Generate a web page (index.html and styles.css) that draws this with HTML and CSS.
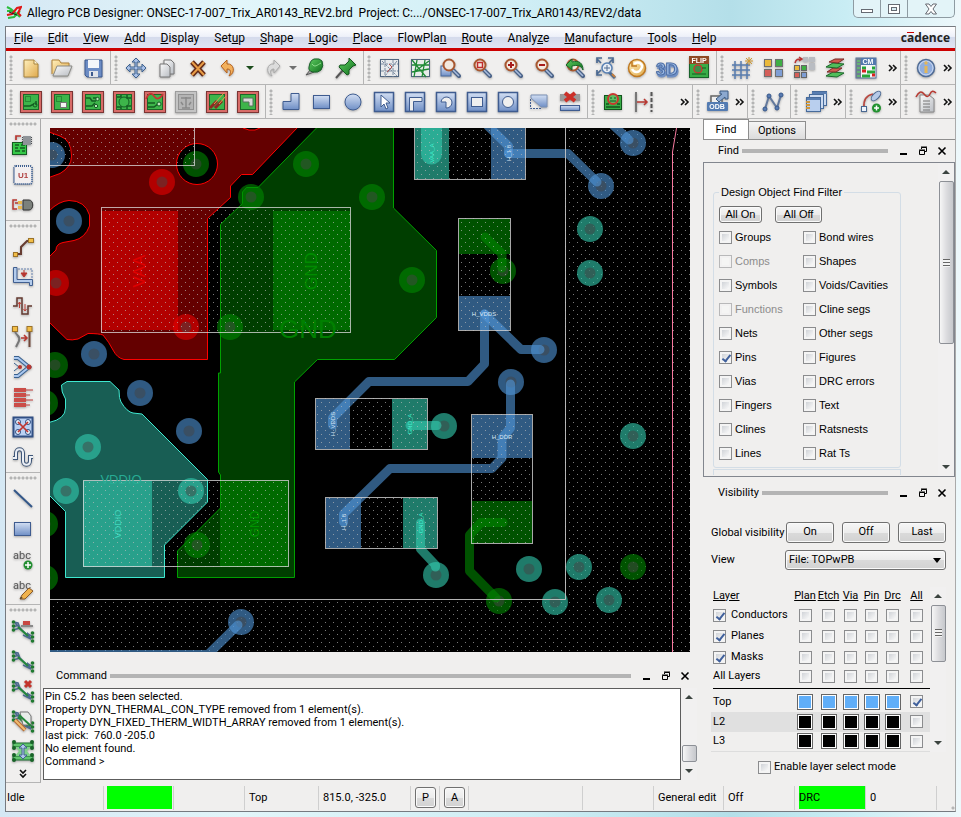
FILE: index.html
```html
<!DOCTYPE html>
<html lang="en">
<head>
<meta charset="utf-8">
<title>Allegro PCB Designer</title>
<link rel="stylesheet" href="styles.css">
</head>
<body>
<svg class="defs" aria-hidden="true">
  <defs>
    <linearGradient id="gBlue" x1="0" y1="0" x2="0" y2="1"><stop offset="0" stop-color="#d3dff3"/><stop offset="1" stop-color="#6f8fc6"/></linearGradient>
    <linearGradient id="gGold" x1="0" y1="0" x2="1" y2="1"><stop offset="0" stop-color="#fff0bd"/><stop offset="1" stop-color="#dfa94c"/></linearGradient>
    <linearGradient id="gGray" x1="0" y1="0" x2="1" y2="1"><stop offset="0" stop-color="#fafafa"/><stop offset="1" stop-color="#b9bdc3"/></linearGradient>
    <linearGradient id="gGreen" x1="0" y1="0" x2="1" y2="1"><stop offset="0" stop-color="#5fce62"/><stop offset="1" stop-color="#11701d"/></linearGradient>
    <pattern id="dots" width="8" height="8" patternUnits="userSpaceOnUse"><rect x="1" y="2" width="1" height="1" class="dot"/><rect x="5" y="6" width="1" height="1" class="dot"/></pattern>
    <symbol id="board" viewBox="0 0 24 24"><rect x="1.500" y="1.500" width="21" height="21" fill="#d86c68" stroke="#7c3534"/><rect x="4.500" y="4.500" width="15" height="15" fill="#3db54a" stroke="#1d6627"/></symbol>
    <symbol id="lens" viewBox="0 0 24 24"><path d="M14 14l6 6" stroke="#4a6288" stroke-width="4" stroke-linecap="round"/><path d="M14 14l6 6" stroke="#a8bcdc" stroke-width="1.500"/><circle cx="10" cy="9" r="5.500" fill="#f3e9df" stroke="#a8572f" stroke-width="2"/></symbol>
    <symbol id="net" viewBox="0 0 24 24"><path d="M4 4l16 16M2 3l5 1 2 5M2 8l6-2M2 11l7-2" fill="none" stroke="#4b6990" stroke-width="1.500"/><path d="M20 20l-4-6M20 20l-8-4M22 18l-6-4" fill="none" stroke="#4b6990" stroke-width="1.500"/><path d="M7 8l10 9" stroke="#23873a" stroke-width="2"/><g fill="#1f7a30"><circle cx="2.500" cy="3" r="1.800"/><circle cx="2.500" cy="7" r="1.800"/><circle cx="2.500" cy="11" r="1.800"/><circle cx="21.500" cy="14" r="1.800"/><circle cx="21.500" cy="18" r="1.800"/><circle cx="21.500" cy="22" r="1.800"/></g></symbol>
    <symbol id="more" viewBox="0 0 10 8"><path d="M1 1l3 3-3 3M5 1l3 3-3 3" fill="none" stroke="#111" stroke-width="1.600"/></symbol>
    <symbol id="min" viewBox="0 0 10 10"><path d="M1 8h7" stroke="#000" stroke-width="2"/></symbol>
    <symbol id="restore" viewBox="0 0 10 10"><path d="M3.500 3V1.500h5v4H7M1.500 4.500h5v4h-5zM3 1h6M1 4h6" fill="none" stroke="#000"/></symbol>
    <symbol id="close" viewBox="0 0 10 10"><path d="M1.500 1.500l7 7M8.500 1.500l-7 7" stroke="#000" stroke-width="1.600"/></symbol>
    <symbol id="via" viewBox="-14 -14 28 28" overflow="visible"><circle r="13"/><circle r="5.500" class="hole"/></symbol>
  </defs>
</svg>

<header class="titlebar">
  <svg class="logo" viewBox="0 0 16 16"><path d="M1 2l4 2 9 8M1 6l5 0 4 5M2 13l6-1 6-6" fill="none" stroke="#2bbd3c" stroke-width="2"/><path d="M1 10l5-1 5-6 4-1-3 6 3 3" fill="none" stroke="#e01717" stroke-width="2"/><path d="M3 7l8 3" stroke="#222"/></svg>
  <h1>Allegro PCB Designer: ONSEC-17-007_Trix_AR0143_REV2.brd&nbsp; Project: C:.../ONSEC-17-007_Trix_AR0143/REV2/data</h1>
  <div class="winbuttons">
    <button aria-label="Minimize"><svg width="14" height="12"><rect x="1.500" y="6.500" width="11" height="3" fill="#fff" stroke="#666a72"/></svg></button>
    <button aria-label="Maximize"><svg width="14" height="12"><rect x="1.500" y="1.500" width="11" height="9" fill="#fff" stroke="#666a72"/><rect x="4.500" y="4.500" width="5" height="3" fill="#d8ecf2" stroke="#666a72"/></svg></button>
    <button class="wide" aria-label="Close"><svg width="14" height="12"><path d="M1.500 1h3.500l2 2.500L9 1h3.500L9 6l3.500 5H9L7 8.500 5 11H1.500L5 6z" fill="#fff" stroke="#666a72"/></svg></button>
  </div>
</header>

<div class="frame">
<nav class="menubar">
  <ul>
    <li><a href="#"><u>F</u>ile</a></li><li><a href="#"><u>E</u>dit</a></li><li><a href="#"><u>V</u>iew</a></li><li><a href="#"><u>A</u>dd</a></li><li><a href="#"><u>D</u>isplay</a></li><li><a href="#">Set<u>u</u>p</a></li><li><a href="#"><u>S</u>hape</a></li><li><a href="#"><u>L</u>ogic</a></li><li><a href="#"><u>P</u>lace</a></li><li><a href="#">FlowPla<u>n</u></a></li><li><a href="#"><u>R</u>oute</a></li><li><a href="#">Analy<u>z</u>e</a></li><li><a href="#"><u>M</u>anufacture</a></li><li><a href="#"><u>T</u>ools</a></li><li><a href="#"><u>H</u>elp</a></li>
  </ul>
  <span class="brand">c<span class="macron">a</span>dence</span>
</nav>

<div class="toolbar">
  <div class="group"><i class="grip"></i>
    <button aria-label="New"><svg viewBox="0 0 24 24"><path d="M5 4h10l4 4v13H5z" fill="url(#gGold)" stroke="#a8843f"/><path d="M15 4v4h4" fill="#fff6d8" stroke="#a8843f"/></svg></button>
    <button aria-label="Open"><svg viewBox="0 0 24 24"><path d="M2 18V4h7l2 3h8v4" fill="url(#gGold)" stroke="#b08238"/><path d="M3 20l4-10h15l-4 10z" fill="url(#gGray)" stroke="#8a8a84"/></svg></button>
    <button aria-label="Save"><svg viewBox="0 0 24 24"><path d="M4 4h17v17H6l-2-2z" fill="#6c8cc4" stroke="#3b598e"/><rect x="7" y="4" width="11" height="8" fill="#f4f6fa"/><rect x="8" y="15" width="9" height="6" fill="#dfe3ea"/><rect x="10" y="16" width="2" height="4" fill="#3b598e"/></svg></button>
  </div>
  <div class="group"><i class="grip"></i>
    <button aria-label="Move"><svg viewBox="0 0 24 24"><path d="M12 2l4 4h-3v5h5V8l4 4-4 4v-3h-5v5h3l-4 4-4-4h3v-5H6v3l-4-4 4-4v3h5V6H8z" fill="#a9c0e6" stroke="#3f628f"/></svg></button>
    <button aria-label="Copy"><svg viewBox="0 0 24 24"><path d="M9 4h7l3 3v11H9z" fill="url(#gGray)" stroke="#777"/><path d="M5 8h7l3 3v10H5z" fill="url(#gGray)" stroke="#777"/></svg></button>
    <button aria-label="Delete"><svg viewBox="0 0 24 24"><path d="M6 6l12 13M18 6L6 19" stroke="#642a16" stroke-width="5"/><path d="M6 6l12 13M18 6L6 19" stroke="#e89c46" stroke-width="2"/></svg></button>
    <button aria-label="Undo"><svg viewBox="0 0 24 24"><path d="M10 8c7-1 9 9 2 12 3-5 1-7-2-7v4L4 10l6-6z" fill="#f2b05c" stroke="#b4601c"/></svg></button>
    <button class="arrow" aria-label="Undo list"><i class="tri green"></i></button>
    <button aria-label="Redo"><svg viewBox="0 0 24 24"><path d="M14 8C7 7 5 17 12 20c-3-5-1-7 2-7v4l6-7-6-6z" fill="#dcdcdc" stroke="#aaa"/></svg></button>
    <button class="arrow" aria-label="Redo list"><i class="tri"></i></button>
    <button aria-label="Unfix"><svg viewBox="0 0 24 24"><path d="M8 13l-5 6 8-3z" fill="#aaa" stroke="#555"/><path d="M7 7q1-3 4-4 6-1 8 2 2 5-1 9-3 3-8 2-5-1-4-5z" fill="url(#gGreen)" stroke="#1a602a"/><path d="M9 8c3 4 5 1 9-1" fill="none" stroke="#8fe08e"/></svg></button>
    <button aria-label="Fix"><svg viewBox="0 0 24 24"><path d="M10 13l-8 9" stroke="#555" stroke-width="2"/><path d="M15 2l7 7-3 1-4 4v4l-2 1-8-8 1-2h5l4-4z" fill="url(#gGreen)" stroke="#14591f"/></svg></button>
  </div>
  <div class="group"><i class="grip"></i>
    <button aria-label="Unrats all"><svg viewBox="0 0 24 24"><rect x="3.500" y="3.500" width="18" height="17" fill="#e8eaec" stroke="#50657f"/><path d="M4 8h17M4 15h17M8 4v17M16 4v17M5 5l15 15M20 5L8 20" stroke="#7b8ba0" stroke-dasharray="3 1"/><path d="M12 8l3 3-5 5" fill="none" stroke="#b05050"/></svg></button>
    <button aria-label="Rats all"><svg viewBox="0 0 24 24"><rect x="3.500" y="3.500" width="18" height="17" fill="#e8ecea" stroke="#50657f"/><path d="M4 9h17M4 16l17-3M9 4l-3 17M17 4l-3 17M4 4l14 17M21 5L6 16" stroke="#1e8a34" stroke-width="1.300"/></svg></button>
    <button aria-label="Zoom window"><svg viewBox="0 0 24 24"><rect x="2" y="10" width="10" height="10" fill="url(#gBlue)" stroke="#49699c"/><use href="#lens"/></svg></button>
    <button aria-label="Zoom fit"><svg viewBox="0 0 24 24"><use href="#lens"/><rect x="7.500" y="6.500" width="5" height="5" fill="none" stroke="#c02c2c" stroke-width="1.500"/></svg></button>
    <button aria-label="Zoom in"><svg viewBox="0 0 24 24"><use href="#lens"/><path d="M10 6v6M7 9h6" stroke="#a81c1c" stroke-width="2"/></svg></button>
    <button aria-label="Zoom out"><svg viewBox="0 0 24 24"><use href="#lens"/><path d="M7 9h6" stroke="#a81c1c" stroke-width="2"/></svg></button>
    <button aria-label="Zoom previous"><svg viewBox="0 0 24 24"><use href="#lens"/><path d="M3 9l6-6v3c7-2 11 1 11 8-2-5-6-5-11-4v4z" fill="url(#gGreen)" stroke="#17672a"/></svg></button>
    <button aria-label="Zoom points"><svg viewBox="0 0 24 24"><path d="M3 7V2h5M14 2h5v5M8 19H3v-5M3 3l4 4M19 3l-4 4M3 18l4-4" fill="none" stroke="#4a6992" stroke-width="1.700"/><path d="M15 16l6 6" stroke="#4a6992" stroke-width="3"/><circle cx="13" cy="12" r="5" fill="#e8edf4" stroke="#5880b4" stroke-width="1.500"/><path d="M13 9v6M10 12h6" stroke="#506d93"/><path d="M18 18l3 3" stroke="#c6803f" stroke-width="2"/></svg></button>
    <button aria-label="Redraw"><svg viewBox="0 0 24 24"><circle cx="12" cy="12" r="8.500" fill="url(#gGold)" stroke="#c0781f" stroke-width="1.500"/><path d="M9 8c5-4 10 1 7 5-2 4-7 4-9 0" fill="none" stroke="#fff" stroke-width="2.500"/><path d="M7 6v4h5" fill="none" stroke="#c0781f" stroke-width="1.500"/></svg></button>
    <button aria-label="3D view"><svg viewBox="0 0 24 24"><text x="0" y="19" class="t3d">3D</text></svg></button>
    <button aria-label="Flip design"><svg viewBox="0 0 24 24"><rect x="2.500" y="6.500" width="19" height="15" fill="#38ad47" stroke="#17632a"/><circle cx="11" cy="13" r="4" fill="#3f8d47" stroke="#c43a32" stroke-width="1.500"/><path d="M15 12h4M5 18h14" stroke="#145a20"/><rect x="2" y="0" width="20" height="8" fill="#8f4a24"/><text x="12" y="7" class="tflip">FLIP</text></svg></button>
  </div>
  <div class="group grow"><i class="grip"></i>
    <button aria-label="Grid toggle"><svg viewBox="0 0 24 24"><path d="M2 9h18M2 14h18M2 19h18M5 5v18M11 5v18M17 7v16" stroke="#587cae" stroke-width="1.500"/><path d="M19 1v8M15 5h8M16 2l6 6M22 2l-6 6" stroke="#d19b32"/></svg></button>
    <button aria-label="Colors"><svg viewBox="0 0 24 24"><rect x="3.500" y="3.500" width="7" height="7" fill="#eab93b" stroke="#6f6f6f"/><rect x="14.500" y="3.500" width="7" height="7" fill="#3fae45" stroke="#6f6f6f"/><rect x="3.500" y="13.500" width="7" height="7" fill="#d45e58" stroke="#6f6f6f"/><rect x="14.500" y="13.500" width="7" height="7" fill="#7f9ed4" stroke="#6f6f6f"/></svg></button>
    <button aria-label="Shadow mode"><svg viewBox="0 0 24 24"><path d="M11 1h5v5h-5zM17 1h6v5h-6zM17 7h6v7h-6z" fill="#b9bcc2"/><rect x="2.500" y="9.500" width="5" height="5" fill="#eab93b" stroke="#666"/><rect x="9.500" y="9.500" width="5" height="5" fill="#3fae45" stroke="#666"/><rect x="2.500" y="16.500" width="5" height="5" fill="#d45e58" stroke="#666"/><rect x="9.500" y="16.500" width="5" height="5" fill="#7f9ed4" stroke="#666"/><path d="M3 7c1-4 3-4 6-4M7 1l3 2-3 2" fill="none" stroke="#b93232" stroke-width="1.500"/></svg></button>
    <button aria-label="Cross section"><svg viewBox="0 0 24 24"><path d="M3 20l7-4 11 1-7 4z" fill="#50bd5b" stroke="#1a6a2a"/><path d="M4 16l6-4h9l-6 4z" fill="#cf5a50" stroke="#7d2b26"/><path d="M3 11l7-4 11 1-7 4z" fill="#50bd5b" stroke="#1a6a2a"/><path d="M6 6l6-3h9l-6 4z" fill="#cf5a50" stroke="#7d2b26"/></svg></button>
    <button aria-label="Constraint manager"><svg viewBox="0 0 24 24"><rect x="2" y="2" width="20" height="20" fill="#f5f5f5" stroke="#536f9a"/><rect x="2" y="2" width="20" height="7" fill="#5478ae"/><rect x="2" y="2" width="5" height="20" fill="#6c7e92"/><path d="M3 5h3M3 8h3M3 12h3M3 16h3M3 20h3" stroke="#63c26b" stroke-width="1.500"/><path d="M8 12h4M18 12h3M13 16h8M8 20h8" stroke="#25a638" stroke-width="3"/><path d="M8 15h4M18 19h3" stroke="#d92222" stroke-width="3"/><text x="14" y="8" class="tflip">CM</text></svg></button>
    <button class="more" aria-label="More"><svg viewBox="0 0 10 8"><use href="#more"/></svg></button>
  </div>
  <div class="group last"><i class="grip"></i>
    <button aria-label="Show element"><svg viewBox="0 0 24 24"><circle cx="12" cy="12" r="8.500" fill="#91aede" stroke="#516c94" stroke-width="1.500"/><circle cx="12" cy="12" r="7" fill="none" stroke="#d0dcf2"/><path d="M12 10v7" stroke="#e3b659" stroke-width="3"/><circle cx="12" cy="7" r="1.700" fill="#e3b659"/></svg></button>
    <button class="more" aria-label="More"><svg viewBox="0 0 10 8"><use href="#more"/></svg></button>
  </div>
</div>

<div class="toolbar">
  <div class="group"><i class="grip"></i>
    <button aria-label="Etch edit"><svg viewBox="0 0 24 24"><use href="#board"/><rect x="6.500" y="6.500" width="5" height="5" fill="none" stroke="#145c22" stroke-dasharray="1 1"/><path d="M5 16h6l4-2M17 11v4" fill="none" stroke="#145c22" stroke-width="1.500"/><circle cx="16" cy="15" r="2" fill="none" stroke="#145c22"/></svg></button>
    <button aria-label="Placement edit"><svg viewBox="0 0 24 24"><use href="#board"/><rect x="6.500" y="6.500" width="5" height="5" fill="none" stroke="#145c22" stroke-dasharray="1 1"/><rect x="10.500" y="12.500" width="6" height="5" fill="#f5f5f5" stroke="#777"/></svg></button>
    <button aria-label="Signal edit"><svg viewBox="0 0 24 24"><use href="#board"/><path d="M5 8h4l2 3h4M5 16h6l3-3M12 8h5" fill="none" stroke="#145c22" stroke-width="1.500"/><circle cx="16.500" cy="9" r="1.700" fill="#bfe5bd" stroke="#145c22"/><circle cx="15" cy="16" r="1.700" fill="#bfe5bd" stroke="#145c22"/></svg></button>
    <button aria-label="General edit"><svg viewBox="0 0 24 24"><use href="#board"/><circle cx="12" cy="12" r="5" fill="none" stroke="#145c22"/><path d="M5 7h4v-2M15 5v3h4M5 17h4v2M15 19v-3h4" fill="none" stroke="#145c22" stroke-width="1.500"/></svg></button>
    <button aria-label="Signal integrity"><svg viewBox="0 0 24 24"><use href="#board"/><path d="M3 9q4-9 8-3t9-2" fill="none" stroke="#c83434" stroke-width="1.700"/><path d="M5 13h7M5 17h6l4-3" stroke="#145c22" fill="none" stroke-width="1.500"/><circle cx="16" cy="14" r="2" fill="#bfe5bd" stroke="#145c22"/></svg></button>
    <button aria-label="Flow planning" disabled><svg viewBox="0 0 24 24"><rect x="1.500" y="1.500" width="21" height="21" fill="#c4c4c4" stroke="#9c9c9c"/><rect x="4.500" y="4.500" width="15" height="15" fill="#b4b4b4" stroke="#919191"/><path d="M7 8h10M12 7v11M8 18h8M7 12l2 3M17 12l-2 3" stroke="#898989" stroke-width="1.500"/></svg></button>
    <button aria-label="Route edit"><svg viewBox="0 0 24 24"><use href="#board"/><path d="M5 18l7-7M10 18l7-7" stroke="#8e2822" stroke-width="3"/><path d="M9 14L19 3M14 14l7-8" stroke="#e4a04c"/></svg></button>
    <button aria-label="Shape edit"><svg viewBox="0 0 24 24"><use href="#board"/><path d="M7 8h10v8h-4v-4H7z" fill="#d8d8d8" stroke="#55705a"/></svg></button>
  </div>
  <div class="group"><i class="grip"></i>
    <button aria-label="Polygon"><svg viewBox="0 0 24 24"><path d="M12 3.500h8v16H4v-8h8z" fill="url(#gBlue)" stroke="#3f5c90"/></svg></button>
    <button aria-label="Rectangle"><svg viewBox="0 0 24 24"><rect x="3.500" y="5.500" width="16" height="13" fill="url(#gBlue)" stroke="#3f5c90"/></svg></button>
    <button aria-label="Circle"><svg viewBox="0 0 24 24"><circle cx="12" cy="12" r="8" fill="url(#gBlue)" stroke="#3f5c90"/></svg></button>
    <button aria-label="Select shape"><svg viewBox="0 0 24 24"><rect x="2.500" y="2.500" width="19" height="19" fill="url(#gBlue)" stroke="#3f5c90" stroke-width="1.500"/><path d="M9 5v12l3-3 2 5 2-1-2-5h4z" fill="#fff" stroke="#3f5c90"/></svg></button>
    <button aria-label="Shape void polygon"><svg viewBox="0 0 24 24"><rect x="2.500" y="2.500" width="19" height="19" fill="url(#gBlue)" stroke="#3f5c90" stroke-width="1.500"/><path d="M6.500 21V7.500H19v4h-8.500V21z" fill="#efefef" stroke="#3f5c90"/></svg></button>
    <button aria-label="Void select"><svg viewBox="0 0 24 24"><rect x="2.500" y="2.500" width="19" height="19" fill="url(#gBlue)" stroke="#3f5c90" stroke-width="1.500"/><path d="M12 12H7a5.500 5.500 0 1 1 5 6z" fill="#efefef" stroke="#3f5c90"/></svg></button>
    <button aria-label="Void rectangle"><svg viewBox="0 0 24 24"><rect x="2.500" y="2.500" width="19" height="19" fill="url(#gBlue)" stroke="#3f5c90" stroke-width="1.500"/><rect x="6.500" y="7.500" width="11" height="9" fill="#efefef" stroke="#3f5c90"/></svg></button>
    <button aria-label="Void circle"><svg viewBox="0 0 24 24"><rect x="2.500" y="2.500" width="19" height="19" fill="url(#gBlue)" stroke="#3f5c90" stroke-width="1.500"/><circle cx="12" cy="12" r="5.500" fill="#efefef" stroke="#3f5c90"/></svg></button>
    <button aria-label="Edit boundary"><svg viewBox="0 0 24 24"><path d="M4 5h16v12h-6L4 8z" fill="url(#gBlue)" stroke="#7b90b5"/><path d="M3.500 9v9.500H14" fill="none" stroke="#3f5c90" stroke-dasharray="2 1"/></svg></button>
    <button aria-label="Delete islands"><svg viewBox="0 0 24 24"><rect x="2" y="4" width="20" height="7" fill="#999"/><path d="M7 3l10 8M17 3L7 11" stroke="#cc3028" stroke-width="4"/><rect x="2.500" y="15.500" width="19" height="5" fill="url(#gBlue)" stroke="#3f5c90"/></svg></button>
  </div>
  <div class="group grow"><i class="grip"></i>
    <button aria-label="Waive DRC"><svg viewBox="0 0 24 24"><rect x="3.500" y="5.500" width="17" height="14" fill="#39ad47" stroke="#12551e"/><path d="M5 17h14M5 14h3M16 14h3" stroke="#12551e" stroke-width="1.500"/><circle cx="12" cy="9" r="5" fill="#5fbf65" stroke="#c8372e" stroke-width="2"/><path d="M9 8h2M13 8h2M9 11h6" stroke="#12551e"/></svg></button>
    <button aria-label="Dimension"><svg viewBox="0 0 24 24"><path d="M4 2v20" stroke="#777" stroke-width="2"/><path d="M19.500 2v20" stroke="#555" stroke-width="2" stroke-dasharray="4 2"/><path d="M5 12h10M12 9l3 3-3 3" fill="none" stroke="#b83731" stroke-width="1.500"/></svg></button>
    <button class="more" aria-label="More"><svg viewBox="0 0 10 8"><use href="#more"/></svg></button>
  </div>
  <div class="group"><i class="grip"></i>
    <button aria-label="ODB export"><svg viewBox="0 0 24 24"><path d="M5 13V6h11v7" fill="#eee" stroke="#666" stroke-width="1.500"/><path d="M10 9l6-5h-2V1h8v8h-3V7l-6 5z" fill="#8ba8cf" stroke="#3c5d84"/><rect x="1" y="12" width="21" height="9" rx="1" fill="#537bb2"/><text x="11" y="19" class="tflip">ODB</text></svg></button>
    <button class="more" aria-label="More"><svg viewBox="0 0 10 8"><use href="#more"/></svg></button>
  </div>
  <div class="group"><i class="grip"></i>
    <button aria-label="Signal probe"><svg viewBox="0 0 24 24"><path d="M4 19L8 6l8 12 4-13" fill="none" stroke="#63799d" stroke-width="2"/><g fill="#587bb2" stroke="#38598c"><circle cx="4" cy="19" r="2"/><circle cx="8" cy="6" r="2"/><circle cx="16" cy="18" r="2"/><circle cx="20" cy="5" r="2"/></g></svg></button>
  </div>
  <div class="group"><i class="grip"></i>
    <button aria-label="Reports"><svg viewBox="0 0 24 24"><rect x="8.500" y="1.500" width="14" height="14" fill="#ccdbf0" stroke="#476b9b"/><path d="M8 3h15" stroke="#587eb2" stroke-width="2"/><rect x="5.500" y="4.500" width="14" height="14" fill="#ccdbf0" stroke="#476b9b"/><rect x="2.500" y="7.500" width="14" height="14" fill="#b9cfee" stroke="#476b9b"/><path d="M3 9h13" stroke="#587eb2" stroke-width="2"/><path d="M2 12h4M2 15h4M2 18h4" stroke="#cf963a" stroke-width="2"/></svg></button>
    <button class="more" aria-label="More"><svg viewBox="0 0 10 8"><use href="#more"/></svg></button>
  </div>
  <div class="group"><i class="grip"></i>
    <button aria-label="Add connect"><svg viewBox="0 0 24 24"><path d="M5 18C4 8 9 5 14 4" fill="none" stroke="#b94840" stroke-width="1.700"/><rect x="2.500" y="16.500" width="5" height="5" fill="#eef3fb" stroke="#4a6992"/><ellipse cx="17" cy="6" rx="6" ry="3" transform="rotate(-45 17 6)" fill="#b6cae8" stroke="#4a6992"/><circle cx="17.500" cy="18" r="4.500" fill="#22922f"/><path d="M15 18h5M17.500 15.500v5" stroke="#fff" stroke-width="1.500"/></svg></button>
    <button class="more" aria-label="More"><svg viewBox="0 0 10 8"><use href="#more"/></svg></button>
  </div>
  <div class="group last"><i class="grip"></i>
    <button aria-label="Signal report"><svg viewBox="0 0 24 24"><path d="M6 5h9l5 4v13H6z" fill="url(#gGray)" stroke="#888"/><path d="M9 11h7M9 14h7M9 17h7M9 20h7" stroke="#777"/><path d="M2 7q4-8 8-3t6 0 6-1" fill="none" stroke="#b73931" stroke-width="1.500"/></svg></button>
    <button class="more" aria-label="More"><svg viewBox="0 0 10 8"><use href="#more"/></svg></button>
  </div>
</div>

<main>
  <aside class="sidetools">
    <div class="vgroup"><i class="grip"></i>
      <button aria-label="Place manual"><svg viewBox="0 0 24 24"><rect x="1.500" y="9.500" width="14" height="12" fill="#35c848" stroke="#145b21"/><path d="M4 12h4M10 12h4M4 15h3M9 15h5M4 18h5M11 18h3" stroke="#145b21" stroke-width="1.500"/><rect x="12" y="3" width="8" height="9" fill="#8f9498"/><path d="M11 4.500h10M11 6.500h10M11 8.500h10M11 10.500h10" stroke="#4b4f55" stroke-dasharray="1 8"/><path d="M5 7V3h5" fill="none" stroke="#b83731" stroke-width="1.700"/></svg></button>
      <button aria-label="Place component"><svg viewBox="0 0 24 24"><rect x="3" y="3" width="18" height="18" rx="2" fill="#f2eff0" stroke="#3d5f91" stroke-width="2" stroke-dasharray="1 1"/><text x="12" y="15" class="tu1">U1</text></svg></button>
      <button aria-label="Swap"><svg viewBox="0 0 24 24"><path d="M6 7H2v9h4M4 10h3" stroke="#b83731" fill="none" stroke-width="1.500"/><rect x="7" y="8" width="4" height="3" fill="#e8b54c"/><rect x="7" y="13" width="4" height="3" fill="#e8b54c"/><path d="M12 7h6c5 0 5 10 0 10h-6z" fill="#7c817c" stroke="#333"/></svg></button>
    </div>
    <div class="vgroup"><i class="grip"></i>
      <button aria-label="Route connect"><svg viewBox="0 0 24 24"><path d="M5 19h5v-7l6-6h4" fill="none" stroke="#673c31" stroke-width="2"/><rect x="2.500" y="17.500" width="4" height="4" fill="#f2bd46" stroke="#9b732a"/><rect x="17.500" y="3.500" width="5" height="4" fill="#f2bd46" stroke="#9b732a"/></svg></button>
      <button aria-label="Slide"><svg viewBox="0 0 24 24"><path d="M7 4h14v10" fill="none" stroke="#6481ae" stroke-dasharray="2 1"/><path d="M2.500 2.500v15h16v3h3v-6H6V2.500z" fill="#b4ccec" stroke="#415f90"/><path d="M13 5v5M10 8h6l-3 4z" fill="#b83731" stroke="#b83731"/></svg></button>
      <button aria-label="Delay tune"><svg viewBox="0 0 24 24"><path d="M2 11h4V3h5v16h6v-8h4" fill="none" stroke="#63382f" stroke-width="1.500"/><path d="M8.500 13V7M7 9l1.500-2L10 9M14 9v7M12.500 14l1.500 2 1.500-2" fill="none" stroke="#bc4037"/></svg></button>
      <button aria-label="Custom smooth"><svg viewBox="0 0 24 24"><path d="M4 5c0 7 6 4 4 11l-3 6" fill="none" stroke="#777" stroke-width="2"/><path d="M18.500 5v17" stroke="#70483a" stroke-width="2"/><path d="M10 13h5M13 10l3 3-3 3" stroke="#b83731" fill="none" stroke-width="1.500"/><rect x="1.500" y="1.500" width="5" height="5" fill="#f2bd46" stroke="#9b732a"/><rect x="16" y="1.500" width="5" height="5" fill="#f2bd46" stroke="#9b732a"/></svg></button>
      <button aria-label="Phase tune"><svg viewBox="0 0 24 24"><path d="M3 3h4l11 9-11 9H3" fill="none" stroke="#39608d" stroke-width="4"/><path d="M3 3h4l11 9-11 9H3" fill="none" stroke="#a9c7ef" stroke-width="2"/><path d="M3 8l5 4M3 16l5-4" stroke="#39608d"/><circle cx="18" cy="12" r="2.500" fill="#b83731"/><circle cx="9" cy="12" r="2" fill="#b83731"/></svg></button>
      <button aria-label="Spread lines"><svg viewBox="0 0 24 24"><path d="M3 5h12M3 10h12M3 15h12M3 20h12" stroke="#cb4d48" stroke-width="4"/><path d="M15 5h7M15 10h4M15 15h7M15 20h4" stroke="#bd3d38"/></svg></button>
      <button aria-label="Fanout"><svg viewBox="0 0 24 24"><rect x="2.500" y="2.500" width="19" height="19" fill="#bad1f3" stroke="#304f84" stroke-width="2"/><g fill="#e9eff8" stroke="#304f84"><circle cx="7" cy="7" r="2.500"/><circle cx="17" cy="7" r="2.500"/><circle cx="7" cy="17" r="2.500"/><circle cx="17" cy="17" r="2.500"/></g><path d="M7 7l10 10M17 7L7 17" stroke="#c0352f" stroke-width="1.700"/></svg></button>
      <button aria-label="Curve route"><svg viewBox="0 0 24 24"><path d="M2 13h3V8c0-5 7-5 7 0v8c0 5 7 5 7 0v-4h3" fill="none" stroke="#3f5678" stroke-width="4"/><path d="M2 13h3V8c0-5 7-5 7 0v8c0 5 7 5 7 0v-4h3" fill="none" stroke="#ebeff5" stroke-width="2"/></svg></button>
    </div>
    <div class="vgroup"><i class="grip"></i>
      <button aria-label="Add line"><svg viewBox="0 0 24 24"><path d="M3 3l18 17" stroke="#335789" stroke-width="2"/></svg></button>
      <button aria-label="Add rectangle"><svg viewBox="0 0 24 24"><rect x="3.500" y="5.500" width="16" height="13" fill="url(#gBlue)" stroke="#3f5c90"/></svg></button>
      <button aria-label="Add text"><svg viewBox="0 0 24 24"><text x="2" y="12" class="tabc">abc</text><circle cx="17" cy="18" r="4.500" fill="#238e31"/><path d="M14 18h6M17 15v6" stroke="#fff" stroke-width="1.500"/></svg></button>
      <button aria-label="Edit text"><svg viewBox="0 0 24 24"><text x="2" y="12" class="tabc">abc</text><path d="M9 22l2-4 7-7 4 3-8 8z" fill="#f0b24c" stroke="#8b5a28"/><path d="M9 22l1-2 2 1z" fill="#333"/></svg></button>
    </div>
    <div class="vgroup"><i class="grip"></i>
      <button aria-label="Assign net"><svg viewBox="0 0 24 24"><use href="#net"/><rect x="12" y="2" width="7" height="5" fill="#c84843"/><path d="M10 7h12" stroke="#8a8a8a" stroke-width="2"/></svg></button>
      <button aria-label="Rats net"><svg viewBox="0 0 24 24"><use href="#net"/></svg></button>
      <button aria-label="Delete net"><svg viewBox="0 0 24 24"><use href="#net"/><path d="M14 2l6 6M20 2l-6 6" stroke="#c3342c" stroke-width="3"/></svg></button>
      <button aria-label="Edit net"><svg viewBox="0 0 24 24"><use href="#net"/><path d="M9 3h8l3 4v9h-8z" fill="#e8ece9" stroke="#777"/><path d="M8 6l12 11" stroke="#23873a" stroke-width="2"/><path d="M4 11l10 10" stroke="#b66c35" stroke-width="4"/><path d="M4 11l10 10" stroke="#f0bc71" stroke-width="2"/></svg></button>
      <button aria-label="Auto swap"><svg viewBox="0 0 24 24"><path d="M2 4h20v4H2zM2 17h20v4H2z" fill="#61c56e" stroke="#1d6c31"/><path d="M4 8l4 4-4 5h16l-4-5 4-4z" fill="#7fd08a"/><path d="M12 5l4 4h-3v7h3l-4 4-4-4h3V9H8z" fill="#afc6ea" stroke="#43628f"/><g fill="#176427"><circle cx="3" cy="3" r="2"/><circle cx="21" cy="3" r="2"/><circle cx="3" cy="21" r="2"/><circle cx="21" cy="21" r="2"/><circle cx="3" cy="9" r="2"/><circle cx="21" cy="9" r="2"/><circle cx="3" cy="16" r="2"/><circle cx="21" cy="16" r="2"/></g></svg></button>
    </div>
    <button class="more down" aria-label="More"><svg viewBox="0 0 10 8"><use href="#more"/></svg></button>
  </aside>

  <section class="center">
    <svg class="canvas" viewBox="50 128 640 525" preserveAspectRatio="xMinYMin slice" role="img" aria-label="Board layout">
      <rect x="50" y="128" width="2000" height="2000" fill="#000"/>
      <path class="redfill" d="M49 127H298L252.500 174.500H241.500L230.500 186V197.500L207.500 218.500V359.500H124Q117 358 113 350T103 335Q99 333.500 88 333.500L78 339Q72 340.500 67 339.500L49 322V257L56 250Q56 244 63 242.500L74 240.500Q85 238 89.500 226V215Q85 200.500 69 200.500Q59 201 49 211V177.500L60 173.500Q71.500 167 71.500 156Q71.500 140 60 136L49 132z"/>
      <circle cx="197" cy="164" r="20.500" fill="#000" stroke="#f00"/>
      <path d="M243 128l6 2h6l5-2" fill="#000" stroke="#f00"/>
      <path class="greenfill" d="M317.500 127L258 187.500H246.500L242.500 192V203.500L220.500 224.500V373H218.500V472L220.500 475V508L177.500 551V577.500H294.500V382L317.500 359.500H394.500L436.500 317.500V250.500L393.500 208V127z"/>
      <path class="tealfill" d="M49 422.500Q65.500 419 65.500 408V399Q61 392 61.500 385L67 381.500H110L119 390Q119 399 121 402Q127 412 133 413L142 414L207.500 479.500V502L164.500 545V577.500H65.500V511.500L49 495z"/>
      <path d="M565 128h2000v2000H50V600h515z" fill="url(#dots)"/>

      <g class="red"><rect x="101" y="211" width="77" height="119"/><use href="#via" x="148" y="168" width="28" height="28"/><use href="#via" x="172" y="313" width="28" height="28"/><use href="#via" x="42" y="269" width="28" height="28"/></g>
      <g class="green">
        <rect x="273" y="211" width="77" height="119"/><rect x="220" y="481" width="68" height="86"/><rect x="459" y="219" width="51" height="35"/><rect x="472" y="501" width="60" height="42"/>
        <use href="#via" x="182" y="150" width="28" height="28"/><use href="#via" x="237" y="183" width="28" height="28"/><use href="#via" x="292" y="150" width="28" height="28"/><use href="#via" x="358" y="183" width="28" height="28"/><use href="#via" x="398" y="266" width="28" height="28"/><use href="#via" x="216" y="313" width="28" height="28"/><use href="#via" x="183" y="531" width="28" height="28"/><use href="#via" x="41" y="351" width="28" height="28"/><use href="#via" x="31" y="389" width="28" height="28"/><use href="#via" x="31" y="510" width="28" height="28"/><use href="#via" x="31" y="564" width="28" height="28"/><use href="#via" x="489" y="257" width="28" height="28"/><use href="#via" x="485" y="587" width="28" height="28"/><use href="#via" x="619" y="553" width="28" height="28"/>
      </g>
      <g class="blue">
        <rect x="491" y="128" width="34" height="51"/><rect x="459" y="296" width="51" height="34"/><rect x="316" y="399" width="34" height="50"/><rect x="326" y="498" width="35" height="50"/><rect x="472" y="415" width="60" height="43"/>
        <use href="#via" x="38" y="141" width="28" height="28"/><use href="#via" x="55" y="207" width="28" height="28"/><use href="#via" x="80" y="340" width="28" height="28"/><use href="#via" x="126" y="379" width="28" height="28"/><use href="#via" x="175" y="417" width="28" height="28"/><use href="#via" x="619" y="129" width="28" height="28"/><use href="#via" x="587" y="172" width="28" height="28"/><use href="#via" x="530" y="336" width="28" height="28"/><use href="#via" x="497" y="368" width="28" height="28"/><use href="#via" x="227" y="608" width="28" height="28"/>
      </g>
      <g class="teal">
        <rect x="415" y="128" width="34" height="51"/><rect x="392" y="399" width="35" height="50"/><rect x="403" y="498" width="34" height="50"/><rect x="83" y="481" width="69" height="86"/>
        <path d="M421 127h21v27a10.500 10.500 0 0 1-21 0z"/>
        <use href="#via" x="74" y="433" width="28" height="28"/><use href="#via" x="52" y="477" width="28" height="28"/><use href="#via" x="177" y="477" width="28" height="28"/><use href="#via" x="576" y="215" width="28" height="28"/><use href="#via" x="576" y="259" width="28" height="28"/><use href="#via" x="619" y="422" width="28" height="28"/><use href="#via" x="515" y="555" width="28" height="28"/><use href="#via" x="565" y="553" width="28" height="28"/><use href="#via" x="541" y="588" width="28" height="28"/><use href="#via" x="595" y="586" width="28" height="28"/><use href="#via" x="430" y="412" width="28" height="28"/><use href="#via" x="422" y="561" width="28" height="28"/>
      </g>

      <g class="trace tblue">
        <path d="M488 126L508.500 146V153.500"/><path d="M508.500 153.500H568L597 182"/><path d="M612 124L629 140"/>
        <path d="M484.500 314V364L468 381.500H369L332.500 418V425"/><path d="M484.500 314L521 349.500H540"/>
        <path d="M510.500 384V428L502 438V458L492 468.500H390L343.500 514V522"/><path d="M46 654.500H208L238 625"/>
      </g>
      <g class="trace tgreen"><path d="M485 237L502 254V268"/><path d="M503 522.500H481L469.500 535V571L496 598"/></g>
      <g class="trace tteal"><path d="M410 425.500H437"/><path d="M420.500 523V549L435.500 565V567"/></g>

      <g class="outline">
        <rect x="49.500" y="127.500" width="145" height="38"/><rect x="101.500" y="207.500" width="249" height="125"/><rect x="83.500" y="480.500" width="205" height="86"/>
        <rect x="414.500" y="126.500" width="111" height="53"/><rect x="458.500" y="218.500" width="52" height="112"/><rect x="315.500" y="398.500" width="112" height="51"/><rect x="325.500" y="497.500" width="112" height="51"/><rect x="471.500" y="414.500" width="61" height="129"/>
      </g>
      <path d="M565.500 128V599.500H50" fill="none" stroke="#c8c8c8" stroke-opacity=".9"/>
      <path d="M676.500 128L672.500 152V2000" fill="none" stroke="#f7799f"/>

      <g class="label">
        <text transform="translate(145 271) rotate(-90)" font-size="17" fill="#e00000">VAA</text>
        <text transform="translate(317 271) rotate(-90)" font-size="17" fill="#008c00">GND</text>
        <text x="308" y="338" font-size="26" fill="#008000">GND</text>
        <text x="121" y="484" font-size="13" fill="#27ac94">VDDIO</text>
        <text transform="translate(121 524) rotate(-90)" font-size="9" fill="#3fd8bf">VDDIO</text>
        <text transform="translate(259 524) rotate(-90)" font-size="12" fill="#009400">GND</text>
        <g font-size="6" fill="#d9e6f5">
          <text x="484" y="316">H_VDDS</text><text x="502" y="439">H_DDR</text>
          <text transform="translate(335 424) rotate(-90)">H_VDDS</text><text transform="translate(346 522) rotate(-90)">H_1.8</text><text transform="translate(511 153) rotate(-90)">H_1.8</text>
        </g>
        <g font-size="6" fill="#3fefcf"><text transform="translate(412 424) rotate(-90)">GND_A</text><text transform="translate(423 523) rotate(-90)">GND_A</text><text transform="translate(434 153) rotate(-90)">VAA_A</text></g>
      </g>
    </svg>

    <div class="dockhead cmdhead"><span>Command</span><i class="bar"></i><button aria-label="Minimize"><svg><use href="#min"/></svg></button><button aria-label="Float"><svg><use href="#restore"/></svg></button><button aria-label="Close"><svg><use href="#close"/></svg></button></div>
    <div class="cmdbox">
      <textarea aria-label="Command" spellcheck="false" rows="6">Pin C5.2  has been selected.
Property DYN_THERMAL_CON_TYPE removed from 1 element(s).
Property DYN_FIXED_THERM_WIDTH_ARRAY removed from 1 element(s).
last pick:  760.0 -205.0
No element found.
Command &gt;</textarea>
      <div class="scroll low"><i class="up"></i><i class="thumb"></i><i class="dn"></i></div>
    </div>
  </section>

  <section class="right">
    <div class="tabs"><button class="active">Find</button><button>Options</button></div>
    <div class="dockhead"><span>Find</span><i class="bar"></i><button aria-label="Minimize"><svg><use href="#min"/></svg></button><button aria-label="Float"><svg><use href="#restore"/></svg></button><button aria-label="Close"><svg><use href="#close"/></svg></button></div>
    <div class="findbox">
      <div class="findbody">
        <fieldset>
          <legend>Design Object Find Filter</legend>
          <div class="allrow"><button>All On</button><button>All Off</button></div>
          <div class="filters">
            <label><input type="checkbox">Groups</label><label><input type="checkbox">Bond wires</label>
            <label class="off"><input type="checkbox" disabled>Comps</label><label><input type="checkbox">Shapes</label>
            <label><input type="checkbox">Symbols</label><label><input type="checkbox">Voids/Cavities</label>
            <label class="off"><input type="checkbox" disabled>Functions</label><label><input type="checkbox">Cline segs</label>
            <label><input type="checkbox">Nets</label><label><input type="checkbox">Other segs</label>
            <label><input type="checkbox" checked>Pins</label><label><input type="checkbox">Figures</label>
            <label><input type="checkbox">Vias</label><label><input type="checkbox">DRC errors</label>
            <label><input type="checkbox">Fingers</label><label><input type="checkbox">Text</label>
            <label><input type="checkbox">Clines</label><label><input type="checkbox">Ratsnests</label>
            <label><input type="checkbox">Lines</label><label><input type="checkbox">Rat Ts</label>
          </div>
        </fieldset>
        <div class="nextset"></div>
      </div>
      <div class="scroll find"><i class="up"></i><i class="thumb"></i><i class="dn"></i></div>
    </div>
    <div class="dockhead vishead"><span>Visibility</span><i class="bar"></i><button aria-label="Minimize"><svg><use href="#min"/></svg></button><button aria-label="Float"><svg><use href="#restore"/></svg></button><button aria-label="Close"><svg><use href="#close"/></svg></button></div>
    <div class="vis">
      <div class="globals"><span>Global visibility</span><button>On</button><button>Off</button><button>Last</button></div>
      <div class="view"><label for="view">View</label><div class="pick"><select id="view"><option>File: TOPwPB</option></select></div></div>
      <div class="layers">
        <table>
          <colgroup><col><col class="c24"><col class="c23"><col class="c21"><col class="c21"><col class="c21"><col class="c27"></colgroup>
          <thead><tr><th>Layer</th><th>Plan</th><th>Etch</th><th>Via</th><th>Pin</th><th>Drc</th><th>All</th></tr></thead>
          <tbody class="classes">
            <tr><td><label><input type="checkbox" checked>Conductors</label></td><td><input type="checkbox" aria-label="Plan"></td><td><input type="checkbox" aria-label="Etch"></td><td><input type="checkbox" aria-label="Via"></td><td><input type="checkbox" aria-label="Pin"></td><td><input type="checkbox" aria-label="Drc"></td><td><input type="checkbox" aria-label="All"></td></tr>
            <tr><td><label><input type="checkbox" checked>Planes</label></td><td><input type="checkbox" aria-label="Plan"></td><td><input type="checkbox" aria-label="Etch"></td><td><input type="checkbox" aria-label="Via"></td><td><input type="checkbox" aria-label="Pin"></td><td><input type="checkbox" aria-label="Drc"></td><td><input type="checkbox" aria-label="All"></td></tr>
            <tr><td><label><input type="checkbox" checked>Masks</label></td><td><input type="checkbox" aria-label="Plan"></td><td><input type="checkbox" aria-label="Etch"></td><td><input type="checkbox" aria-label="Via"></td><td><input type="checkbox" aria-label="Pin"></td><td><input type="checkbox" aria-label="Drc"></td><td><input type="checkbox" aria-label="All"></td></tr>
            <tr class="all"><td>All Layers</td><td><input type="checkbox" aria-label="Plan"></td><td><input type="checkbox" aria-label="Etch"></td><td><input type="checkbox" aria-label="Via"></td><td><input type="checkbox" aria-label="Pin"></td><td><input type="checkbox" aria-label="Drc"></td><td><input type="checkbox" aria-label="All"></td></tr>
          </tbody>
          <tbody class="rule"><tr><td colspan="7"><hr></td></tr></tbody>
          <tbody class="etch">
            <tr class="top"><td>Top</td><td><button aria-label="Plan color"></button></td><td><button aria-label="Etch color"></button></td><td><button aria-label="Via color"></button></td><td><button aria-label="Pin color"></button></td><td><button aria-label="Drc color"></button></td><td><input type="checkbox" checked aria-label="All"></td></tr>
            <tr class="alt"><td>L2</td><td><button aria-label="Plan color"></button></td><td><button aria-label="Etch color"></button></td><td><button aria-label="Via color"></button></td><td><button aria-label="Pin color"></button></td><td><button aria-label="Drc color"></button></td><td><input type="checkbox" aria-label="All"></td></tr>
            <tr><td>L3</td><td><button aria-label="Plan color"></button></td><td><button aria-label="Etch color"></button></td><td><button aria-label="Via color"></button></td><td><button aria-label="Pin color"></button></td><td><button aria-label="Drc color"></button></td><td><input type="checkbox" aria-label="All"></td></tr>
          </tbody>
        </table>
        <div class="scroll lay"><i class="up"></i><i class="thumb"></i><i class="dn"></i></div>
      </div>
      <label class="enable"><input type="checkbox">Enable layer select mode</label>
    </div>
  </section>
</main>

<footer class="status">
  <span class="s97">Idle</span><span class="s70 lamp"><i></i></span><span class="s71"></span><span class="s74">Top</span><span class="s92">815.0, -325.0</span>
  <span class="s29"><button>P</button></span><span class="s29"><button>A</button></span><span class="grow"></span><span class="s71"></span><span class="s70">General edit</span><span class="s71">Off</span><span class="s71 drc"><b>DRC</b></span><span class="s71">0</span><span class="sizer"></span>
</footer>
</div>
</body>
</html>
```
FILE: styles.css
```css
* { box-sizing: border-box; }
body {
  margin: 0; min-height: 100vh; display: flex; flex-direction: column;
  font: 11px/14px Roboto, sans-serif; color: #000;
  background: linear-gradient(90deg, #d5e8f4, #e2f6fa 25%, #cfeef5 55%, #b4dfe9 76%, #c9edf4 88%, #eef8fb);
}
button { font: inherit; color: inherit; padding: 0; border: 0; background: none; display: flex; align-items: center; justify-content: center; }
.defs { position: absolute; width: 0; height: 0; }

.titlebar { height: 26px; display: flex; align-items: center; padding-left: 6px; }
.logo { width: 16px; height: 16px; }
h1 { flex: 1; margin: 0 0 0 5px; font: 12px/16px Roboto, sans-serif; white-space: nowrap; }
.winbuttons { display: flex; align-self: flex-start; height: 18px; margin-right: 6px; border: 1px solid #8e9ba2; border-top: 0; border-radius: 0 0 5px 5px; background: #e3f4f8; }
.winbuttons button { width: 27px; border-right: 1px solid #8e9ba2; }
.winbuttons .wide { width: 46px; border: 0; }

.frame { flex: 1; display: flex; flex-direction: column; margin: 0 5px 5px; border: 1px solid #767a80; border-right-color: #aaa; background: #f0efee; }
.menubar { display: flex; justify-content: space-between; align-items: center; height: 24px; padding: 0 5px 0 8px; border-bottom: 3px solid #cc0000; background: linear-gradient(#fff, #eef1f9 45%, #d5dbec 50%, #dfe4f3); }
.menubar ul { display: flex; gap: 15px; margin: 0; padding: 0; list-style: none; font-size: 12px; }
.menubar a { color: #000; text-decoration: none; }
.brand { font: bold 12px/16px "Open Sans", sans-serif; color: #222; }
.macron { border-top: 1px solid #cc0000; display: inline-block; line-height: 10px; }

.toolbar { display: flex; height: 34px; border-bottom: 1px solid #b5b5b5; }
.group { display: flex; align-items: center; padding-right: 2px; border-right: 1px solid #b5b5b5; }
.group:has(.more) { padding-right: 0; }
.group.last { border: 0; }
.group.grow { flex: 1; }
.grip { flex: none; width: 9px; height: 26px; background: radial-gradient(circle at 5px 2px, #b4b4b4 1px, transparent 2px) 0 0 / 9px 4px; }
.group button { width: 31px; height: 32px; }
.group .arrow { width: 12px; }
.group .more { width: 14px; margin-left: auto; }
.group svg, .vgroup svg { width: 24px; height: 24px; filter: drop-shadow(0 1px 1px rgba(0, 0, 0, .3)); }
.group .more svg, .more svg { width: 10px; height: 8px; filter: none; }
.tri { border: 4px solid transparent; border-top-color: #707070; border-bottom: 0; }
.tri.green { border-top-color: #1c4c1c; }
.t3d { font: bold 17px "Liberation Sans", sans-serif; fill: #9cb9e3; stroke: #4b6da5; stroke-width: 1px; filter: drop-shadow(1px 2px 0 #6f8fc4); }
.tflip { font: bold 7px "Liberation Sans", sans-serif; fill: #fff; text-anchor: middle; }
.tu1 { font: bold 8px "Liberation Sans", sans-serif; fill: #b04040; text-anchor: middle; }
.tabc { font: 11px Roboto, sans-serif; fill: #555; }

main { flex: 1; display: flex; }
.sidetools { width: 35px; flex: none; border-right: 1px solid #a9a9a9; border-bottom: 1px solid #b5b5b5; }
.vgroup { border-bottom: 1px solid #b5b5b5; }
.vgroup:nth-last-child(2) { border: 0; }
.vgroup .grip { display: block; width: 28px; height: 11px; margin-left: 3px; background: radial-gradient(circle at 2px 5px, #b4b4b4 1px, transparent 2px) 0 0 / 4px 11px; }
.vgroup button { width: 34px; height: 30px; }
.more.down { width: 34px; height: 16px; transform: rotate(90deg); }

.center { flex: 1; display: flex; flex-direction: column; min-width: 0; padding: 9px 0 3px 2px; }
.canvas { flex: 1 1 0; min-height: 300px; margin: 0 7px; display: block; }
.dot { fill: #bbb; fill-opacity: .65; }
.hole { fill: #444; fill-opacity: .5; }
.redfill { fill: #640000; stroke: #f00; }
.greenfill { fill: #003e00; stroke: #00a000; }
.tealfill { fill: #185e54; stroke: #3fe8d0; }
.red { fill: #e60000; fill-opacity: .6; }
.green { fill: #008800; fill-opacity: .6; }
.blue { fill: #5096d8; fill-opacity: .6; }
.teal { fill: #33cdb0; fill-opacity: .6; }
.trace { fill: none; stroke-width: 9px; stroke-opacity: .6; stroke-linejoin: round; stroke-linecap: round; }
.tblue { stroke: #5096d8; }
.tgreen { stroke: #008800; }
.tteal { stroke: #33cdb0; }
.outline { fill: url(#dots); stroke: #e0e0e0; stroke-opacity: .75; }
.label { font-family: "Liberation Sans", sans-serif; text-anchor: middle; }

.dockhead { display: flex; align-items: center; height: 22px; padding: 0 4px 0 15px; }
.dockhead .bar { flex: 1; height: 4px; margin: 0 6px 0 3px; background: #b4b4b4; }
.dockhead button { width: 19px; }
.dockhead svg { width: 10px; height: 10px; }
.cmdhead { height: 36px; padding: 12px 3px 0 13px; }
.cmdbox { display: flex; }
textarea { flex: 1; height: 92px; margin: 0; padding: 1px; border: 1px solid #5c5c5c; resize: none; overflow: hidden; font: 11px/13px Roboto, sans-serif; color: #000; background: #fff; }
.scroll { flex: none; width: 16px; display: flex; flex-direction: column; align-items: center; background: #f1f0f0; }
.up, .dn { flex: none; border: 4px solid transparent; margin: 7px 0; }
.up { border-bottom-color: #3c4440; border-top: 0; }
.dn { border-top-color: #3c4440; border-bottom: 0; margin-top: auto; }
.thumb { width: 15px; border: 1px solid #8d9096; border-radius: 2px; background: linear-gradient(90deg, #f6f6f6, #dcdcdf 50%, #c6c8cc); position: relative; }
.thumb::after { content: ""; position: absolute; left: 3px; right: 3px; top: calc(50% - 4px); height: 8px; background: repeating-linear-gradient(#666 0 1px, #f4f4f4 1px 3px); }
.low .thumb { height: 17px; margin-top: auto; }
.low .thumb::after { display: none; }
.low .dn { margin-top: 7px; }
.find .thumb { height: 163px; }
.lay .thumb { height: 57px; }

.right { flex: none; width: 258px; padding: 1px 0 0 6px; display: flex; flex-direction: column; }
.tabs { display: flex; align-items: flex-end; height: 20px; font-size: 11px; border-bottom: 1px solid #8e8e8e; }
.tabs button { height: 18px; width: 57px; border: 1px solid #8e8e8e; border-left: 0; border-bottom: 0; background: linear-gradient(#f4f4f4, #dcdcdc); }
.tabs .active { width: 46px; height: 20px; border-left: 1px solid #8e8e8e; background: #fff; }
.findbox { flex: 1; display: flex; border: 1px solid #82868e; overflow: hidden; }
.findbody { flex: 1; padding: 23px 0 0 9px; font: 11px/13px "Liberation Sans", sans-serif; }
fieldset { width: 188px; margin: 0; padding: 7px 0 2px 5px; border: 1px solid #d3dde6; border-radius: 3px; }
legend { padding: 0 2px; }
.nextset { width: 188px; height: 6px; margin-top: 1px; border: 1px solid #d3dde6; border-bottom: 0; }
.allrow { display: flex; gap: 13px; }
.allrow button { width: 43px; height: 17px; }
.allrow button + button { width: 47px; }
.allrow button, .globals button, .status button, select { border: 1px solid #707070; border-radius: 3px; background: linear-gradient(#f6f6f6, #ececec 50%, #dadada 52%, #d2d2d2); box-shadow: inset 0 0 0 1px #fafafa; }
.filters { display: grid; grid-template-columns: 84px 1fr; grid-auto-rows: 24px; margin-top: 2px; }
label { display: flex; align-items: center; gap: 3px; }
.off { color: #8c8c8c; }
input[type=checkbox] { flex: none; appearance: none; width: 13px; height: 13px; margin: 0; border: 1px solid #8b8c8e; background: linear-gradient(135deg, #c4c8ce, #f8f8f8 80%); box-shadow: inset 0 0 0 2px #f4f4f4; display: inline-block; vertical-align: middle; position: relative; }
input:disabled { opacity: .55; background: #fafafa; }
input:checked::before { content: ""; position: absolute; left: 4px; top: 1px; width: 3px; height: 7px; border: solid #40609c; border-width: 0 2px 2px 0; transform: rotate(38deg); }

.vishead { height: 30px; padding-top: 2px; }
.vis { padding: 15px 9px 9px 8px; }
.globals { display: flex; gap: 8px; }
.globals span { flex: 1 1 0; min-width: 0; line-height: 21px; white-space: nowrap; }
.globals button { flex: none; width: 48px; height: 21px; }
.view { display: flex; justify-content: space-between; margin-top: 7px; }
.pick { position: relative; }
.pick::after { content: ""; position: absolute; right: 5px; top: 8px; border: 4px solid transparent; border-top: 5px solid #000; border-bottom: 0; pointer-events: none; }
select { appearance: none; display: block; width: 161px; height: 20px; padding: 0 3px; font: inherit; color: #000; }
.layers { display: flex; justify-content: space-between; margin-top: 17px; }
table { width: 219px; table-layout: fixed; border-collapse: collapse; border-bottom: 1px solid #ddd; }
.c24 { width: 24px; } .c23 { width: 23px; } .c21 { width: 21px; } .c27 { width: 27px; }
th { height: 18px; font-weight: normal; text-decoration: underline; }
th, td { padding: 0; text-align: center; white-space: nowrap; }
th:first-child, td:first-child { text-align: left; padding-left: 2px; }
.classes td { height: 21px; }
.classes .all td { height: 17px; }
.classes label { gap: 5px; }
.rule td { height: 7px; }
hr { margin: 0; border: 0; border-top: 1px solid #000; }
.etch td { height: 20px; line-height: 14px; }
.etch button { width: 16px; height: 16px; margin: auto; border: 1px solid #666; background: #000; box-shadow: inset 0 0 0 1px #fff; }
.etch .top button { background: #60aef8; }
.alt { background: #e0e0e0; }
.enable { margin: 8px 0 0 47px; height: 14px; }

.status { flex: none; display: flex; height: 28px; padding-top: 3px; }
.status > span { flex: none; height: 24px; line-height: 24px; padding-left: 4px; border-right: 1px solid #cfcfcf; white-space: nowrap; }
.status > span:first-child { padding-left: 1px; }
.status > .grow { flex: 1; }
.s97 { width: 98px; } .s70 { width: 70px; } .s71 { width: 71px; } .s74 { width: 74px; } .s92 { width: 92px; } .s29 { width: 29px; }
.status > .lamp { padding-left: 3px; }
.lamp i { display: block; width: 65px; height: 23px; background: #0f0; }
.status > .drc { padding-left: 4px; }
.drc b { display: block; height: 23px; font-weight: normal; background: #0f0; }
.status button { width: 21px; height: 21px; margin-top: 1px; }
.status > .sizer { width: 18px; border: 0; background: radial-gradient(circle, #b5b5b5 1px, transparent 2px) right bottom / 4px 4px no-repeat; }
```
